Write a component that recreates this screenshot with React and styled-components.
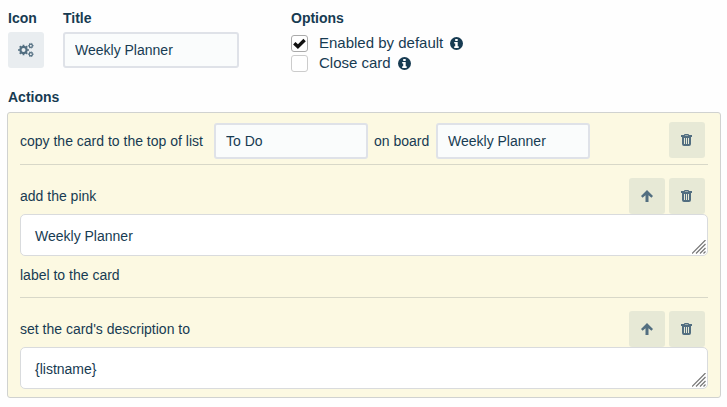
import React, { useState } from "react";
import styled, { createGlobalStyle } from "styled-components";

const GlobalStyle = createGlobalStyle`
  * {
    box-sizing: border-box;
  }

  body {
    margin: 0;
    background: #fefefe;
    color: #173b52;
    font-family: "Liberation Sans", Arial, sans-serif;
    font-size: 14px;
    line-height: 20px;
  }

  input,
  textarea,
  button {
    margin: 0;
    color: inherit;
    font: inherit;
  }
`;

const Page = styled.form`
  padding: 8px 6px 8px 7px;
`;

const Settings = styled.div`
  display: flex;
  align-items: flex-start;
  padding-left: 1px;
`;

const Field = styled.div`
  display: flex;
  flex-direction: column;
  align-items: flex-start;
  gap: 4px;
  width: ${(props) => props.$width};
`;

const Heading = styled.label`
  display: block;
  font-weight: bold;
`;

const IconButton = styled.button`
  display: flex;
  align-items: center;
  justify-content: center;
  flex: none;
  width: 36px;
  height: 36px;
  padding: 0;
  border: 0;
  border-radius: 3px;
  background: ${(props) => (props.$tinted ? "#e7e9d6" : "#e9edf0")};
  color: #526e80;
  cursor: pointer;
`;

const TextInput = styled.input`
  width: ${(props) => props.$width};
  height: 36px;
  padding: 0 10px;
  border: 2px solid #dfe2e8;
  border-radius: 3px;
  background: #fafcfc;
`;

const Options = styled.fieldset`
  margin: 0;
  padding: 0;
  border: 0;
`;

const Legend = styled.legend`
  margin-bottom: 5px;
  padding: 0;
  font-weight: bold;
`;

const Option = styled.label`
  display: flex;
  align-items: center;
  height: 20px;
  font-size: 15px;
`;

const CheckWrap = styled.span`
  display: grid;
  width: 17px;
  height: 17px;
  margin-right: 11px;

  > * {
    grid-area: 1 / 1;
    place-self: center;
  }

  svg {
    pointer-events: none;
  }
`;

const Check = styled.input`
  appearance: none;
  width: 17px;
  height: 17px;
  border: 1px solid ${(props) => (props.checked ? "#aaa" : "#ccc")};
  border-radius: 3px;
  background: #fff;
`;

const ActionsHeading = styled.h2`
  margin: 14px 0 5px 1px;
  font-size: 14px;
  line-height: 20px;
`;

const Panel = styled.div`
  padding: 9px 12px 8px;
  border: 1px solid #d0d2d0;
  border-radius: 3px;
  background: #fcf9e2;
`;

const Action = styled.div`
  & + & {
    margin-top: 5px;
    padding-top: 13px;
    border-top: 1px solid #d8d8c8;
  }
`;

const ActionRow = styled.div`
  display: flex;
  align-items: center;
  justify-content: space-between;
  padding-right: 3px;
`;

const Inputs = styled.div`
  display: flex;
  align-items: center;
  gap: 6px;
  padding-top: 1px;
`;

const InputLabel = styled.label`
  min-width: ${(props) => props.$width};
`;

const Buttons = styled.div`
  display: flex;
  align-self: flex-start;
  gap: 4px;
`;

const AreaWrap = styled.div`
  position: relative;
`;

const Area = styled.textarea`
  display: block;
  width: 100%;
  height: 42px;
  padding: 11px 14px 9px;
  border: 1px solid #d9dbdd;
  border-radius: 5px;
  background: #fff;
  overflow: hidden;
  resize: vertical;

  &::-webkit-resizer {
    display: none;
  }
`;

const GripIcon = styled.svg`
  position: absolute;
  right: 2px;
  bottom: 2px;
  pointer-events: none;
`;

const InfoSvg = styled.svg`
  margin-left: 7px;
`;

const Suffix = styled.div`
  padding: 9px 0 7px;
`;

function CogsIcon() {
  return (
    <svg width="16" height="16" viewBox="0 0 16 16" fill="none" stroke="currentColor">
      <circle cx="5.500" cy="8" r="3.100" strokeWidth="2.200" />
      <circle cx="5.500" cy="8" r="4.500" strokeWidth="1.600" pathLength="16" strokeDasharray="1 1" strokeDashoffset="0.5" />
      <circle cx="12.800" cy="3.700" r="1.600" strokeWidth="1.200" />
      <circle cx="12.800" cy="3.700" r="2.400" strokeWidth="1" pathLength="12" strokeDasharray="1 1" strokeDashoffset="0.5" />
      <circle cx="12.800" cy="12.200" r="1.600" strokeWidth="1.200" />
      <circle cx="12.800" cy="12.200" r="2.400" strokeWidth="1" pathLength="12" strokeDasharray="1 1" strokeDashoffset="0.5" />
    </svg>
  );
}

function InfoIcon() {
  return (
    <InfoSvg width="13" height="13" viewBox="0 0 13 13">
      <circle cx="6.500" cy="6.500" r="6.500" fill="currentColor" />
      <path d="M5.200 2h2.500v2H5.200zM4.200 5h3.500v4.200h1V11H4.200V9.200h1V6.600h-1z" fill="#fff" />
    </InfoSvg>
  );
}

function TrashIcon() {
  return (
    <svg width="12" height="14" viewBox="0 0 12 14" fill="currentColor">
      <path
        fillRule="evenodd"
        d="M3.500 1h4L8 2h3v2h-1v7q0 2-2 2H3q-2 0-2-2V4H0V2h3zM4 2h3v.6H4zM3 5v6h1V5zm2 0v6h1V5zm2 0v6h1V5z"
      />
    </svg>
  );
}

function ArrowIcon() {
  return (
    <svg width="12" height="12" viewBox="0 0 12 12" fill="currentColor">
      <path d="M6 0 12 6 10.400 7.700 7.500 5.200V12h-3V5.200L1.600 7.700 0 6z" />
    </svg>
  );
}

function CheckIcon() {
  return (
    <svg width="13" height="11" viewBox="0 0 13 11" fill="none" stroke="#111">
      <path d="M1.300 5.200 4.900 8.600 11.600 2" strokeWidth="3.400" />
    </svg>
  );
}

function Grip() {
  return (
    <GripIcon width="14" height="14" viewBox="0 0 14 14" stroke="#777" strokeWidth="1.200">
      <path d="M0 13.500 13.500 0M4 13.500 13.500 4M8 13.500 13.500 8M11.500 13.500 13.500 11.500" />
    </GripIcon>
  );
}

function OptionItem({ text, initial }) {
  const [checked, setChecked] = useState(initial);

  return (
    <Option>
      <CheckWrap>
        <Check type="checkbox" checked={checked} onChange={() => setChecked(!checked)} />
        {checked && <CheckIcon />}
      </CheckWrap>
      {text}
      <InfoIcon />
    </Option>
  );
}

function ActionButtons({ movable }) {
  return (
    <Buttons>
      {movable && (
        <IconButton type="button" $tinted aria-label="Move up">
          <ArrowIcon />
        </IconButton>
      )}
      <IconButton type="button" $tinted aria-label="Delete">
        <TrashIcon />
      </IconButton>
    </Buttons>
  );
}

function TextAction({ id, before, value, after }) {
  return (
    <Action>
      <ActionRow>
        <label htmlFor={id}>{before}</label>
        <ActionButtons movable />
      </ActionRow>
      <AreaWrap>
        <Area id={id} defaultValue={value} rows={1} />
        <Grip />
      </AreaWrap>
      {after && <Suffix>{after}</Suffix>}
    </Action>
  );
}

export default function App() {
  return (
    <>
      <GlobalStyle />
      <Page>
        <Settings>
          <Field $width="55px">
            <Heading htmlFor="icon">Icon</Heading>
            <IconButton id="icon" type="button">
              <CogsIcon />
            </IconButton>
          </Field>
          <Field $width="228px">
            <Heading htmlFor="title">Title</Heading>
            <TextInput id="title" $width="176px" defaultValue="Weekly Planner" />
          </Field>
          <Options>
            <Legend>Options</Legend>
            <OptionItem text="Enabled by default" initial />
            <OptionItem text="Close card" initial={false} />
          </Options>
        </Settings>

        <ActionsHeading>Actions</ActionsHeading>
        <Panel>
          <Action>
            <ActionRow>
              <Inputs>
                <InputLabel htmlFor="list" $width="188px">
                  copy the card to the top of list
                </InputLabel>
                <TextInput id="list" $width="154px" defaultValue="To Do" />
                <InputLabel htmlFor="board" $width="56px">
                  on board
                </InputLabel>
                <TextInput id="board" $width="154px" defaultValue="Weekly Planner" />
              </Inputs>
              <ActionButtons />
            </ActionRow>
          </Action>
          <TextAction
            id="label"
            before="add the pink"
            value="Weekly Planner"
            after="label to the card"
          />
          <TextAction id="description" before="set the card's description to" value="{listname}" />
        </Panel>
      </Page>
    </>
  );
}
